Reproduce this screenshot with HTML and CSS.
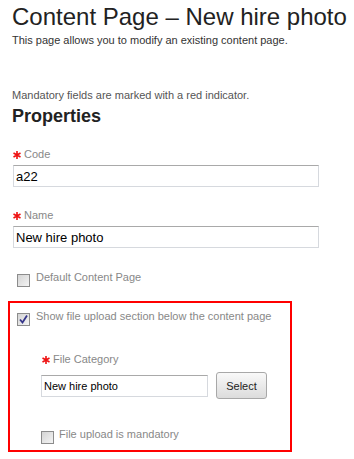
FILE: index.html
```html
<!DOCTYPE html>
<html>
<head>
    <meta charset="UTF-8">
    <link rel="stylesheet" href="styles.css">
</head>
<body>
    <div class="page">
        <h1 class="title">Content Page &ndash; New hire photo</h1>
        <p class="lead">This page allows you to modify an existing content page.</p>
        <p class="note">Mandatory fields are marked with a red indicator.</p>
        <h2 class="section">Properties</h2>

        <div class="field">
            <label class="label"><svg class="req" width="8" height="8" viewBox="0 0 8 8"><path d="M4 0V8M0.5 2L7.5 6M0.5 6L7.5 2"/></svg>Code</label>
            <input class="text" type="text" value="a22">
        </div>

        <div class="field name">
            <label class="label"><svg class="req" width="8" height="8" viewBox="0 0 8 8"><path d="M4 0V8M0.5 2L7.5 6M0.5 6L7.5 2"/></svg>Name</label>
            <input class="text" type="text" value="New hire photo">
        </div>

        <div class="check default">
            <span class="box"></span>
            <span class="check-label">Default Content Page</span>
        </div>

        <div class="upload">
            <div class="check">
                <span class="box"><svg width="11" height="11" viewBox="0 0 11 11"><path d="M2 5.5L4.5 8.5L9 1.5"/></svg></span>
                <span class="check-label">Show file upload section below the content page</span>
            </div>
            <div class="sub">
                <label class="label"><svg class="req" width="8" height="8" viewBox="0 0 8 8"><path d="M4 0V8M0.5 2L7.5 6M0.5 6L7.5 2"/></svg>File Category</label>
                <div class="pick">
                    <input class="text small" type="text" value="New hire photo">
                    <button class="btn" type="button">Select</button>
                </div>
                <div class="check mandatory">
                    <span class="box"></span>
                    <span class="check-label">File upload is mandatory</span>
                </div>
            </div>
        </div>
    </div>
</body>
</html>
```

FILE: styles.css
```css
body {
    margin: 0;
    background: #ffffff;
    font-family: "Liberation Sans", Arial, sans-serif;
}

.page {
    padding: 3px 0 0 12px;
}

.title {
    margin: 0;
    font-size: 24px;
    line-height: 28px;
    font-weight: normal;
    color: #222222;
}

.lead {
    margin: 3px 0 0;
    font-size: 11px;
    line-height: 13px;
    color: #333333;
}

.note {
    margin: 42px 0 0;
    font-size: 11px;
    line-height: 13px;
    color: #555555;
}

.section {
    margin: 3px 0 0;
    font-size: 18px;
    line-height: 22px;
    color: #222222;
}

.field {
    margin-top: 21px;
}

.field.name {
    margin-top: 22px;
}

.label {
    display: flex;
    align-items: center;
    font-size: 11px;
    line-height: 13px;
    color: #888888;
}

.req {
    margin: 0 3px 0 1px;
    fill: none;
    stroke: #ee1111;
    stroke-width: 1.6;
}

.text {
    display: block;
    box-sizing: border-box;
    width: 306px;
    height: 22px;
    margin: 4px 0 0 1px;
    padding: 0 2px;
    border: 1px solid #d6d9de;
    border-top-color: #a9a9a9;
    font-family: "Liberation Sans", Arial, sans-serif;
    font-size: 13px;
    color: #000000;
    outline: none;
}

.check {
    display: flex;
    align-items: flex-start;
    font-size: 11px;
    line-height: 13px;
    color: #888888;
}

.check.default {
    margin-top: 23px;
}

.default .box {
    margin-left: 5px;
}

.box {
    box-sizing: border-box;
    width: 13px;
    height: 13px;
    margin-top: 3px;
    margin-right: 6px;
    border: 1px solid #8c8c8c;
    background: linear-gradient(135deg, #d4d4d4, #f4f4f4);
    display: flex;
    align-items: center;
    justify-content: center;
}

.box svg {
    fill: none;
    stroke: #35358a;
    stroke-width: 1.8;
}

.upload {
    box-sizing: border-box;
    width: 284px;
    margin: 14px 0 0 -4px;
    padding: 7px 0 6px 7px;
    border: 2px solid #ff0000;
}

.sub {
    margin-left: 24px;
    margin-top: 27px;
}

.pick {
    display: flex;
    align-items: center;
    margin-top: 6px;
}

.text.small {
    width: 167px;
    margin: 0;
    font-size: 11px;
}

.btn {
    box-sizing: border-box;
    width: 51px;
    height: 27px;
    margin-left: 8px;
    padding: 0;
    border: 1px solid #a8a8a8;
    border-radius: 3px;
    background: linear-gradient(#f9f9f9, #dcdcdc);
    font-family: "Liberation Sans", Arial, sans-serif;
    font-size: 11px;
    color: #222222;
}

.check.mandatory {
    margin-top: 29px;
}

.mandatory .box {
    margin-right: 5px;
}
```
